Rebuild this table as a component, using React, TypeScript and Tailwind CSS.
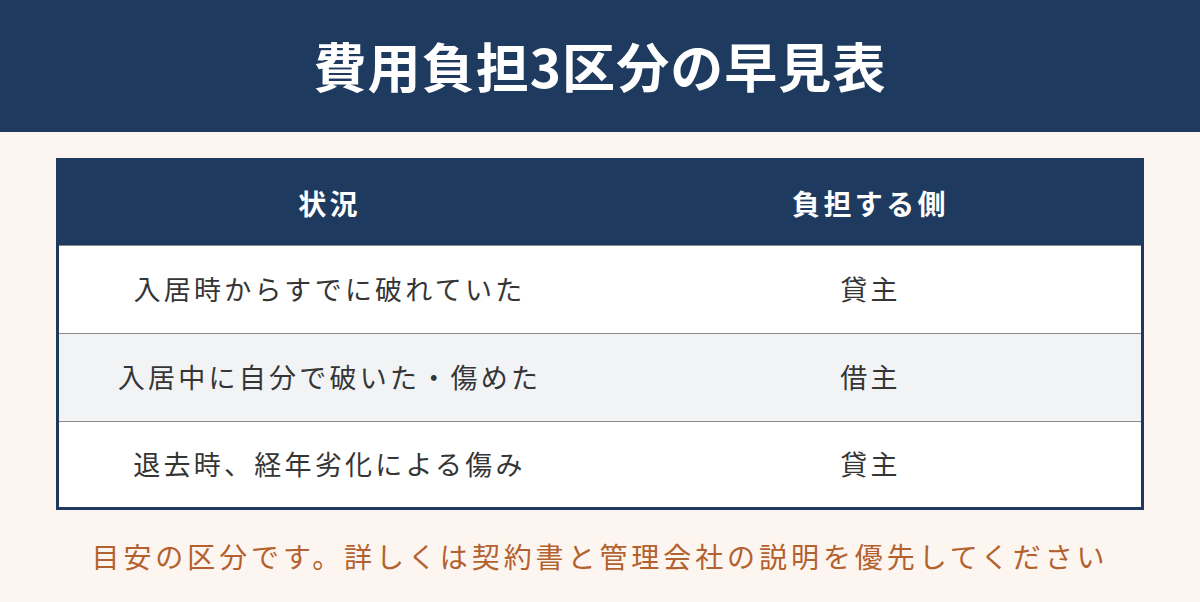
import React from 'react'

const rows = [
  { situation: '入居時からすでに破れていた', payer: '貸主', bg: 'bg-white' },
  { situation: '入居中に自分で破いた・傷めた', payer: '借主', bg: 'bg-[#f2f3f5]' },
  { situation: '退去時、経年劣化による傷み', payer: '貸主', bg: 'bg-white' },
]

function App() {
  return (
    <div
      className="w-[1200px] h-[602px] bg-[#fdf6f0] flex flex-col"
      style={{ fontFamily: '"Noto Sans CJK JP", "Noto Sans", sans-serif' }}
    >
      <header className="h-[132px] bg-[#1f3a5f] flex items-center justify-center">
        <h1 className="text-white text-[53px] font-bold tracking-[0.02em]">費用負担3区分の早見表</h1>
      </header>

      <div className="mx-[56px] mt-[26px] border-[3px] border-[#1f3a5f]">
        <div className="h-[85px] bg-[#1f3a5f] grid grid-cols-2 border-b border-[#8a8a8a] text-white text-[28px] font-bold tracking-[0.12em]">
          <div className="flex items-center justify-center">状況</div>
          <div className="flex items-center justify-center">負担する側</div>
        </div>
        {rows.map((r, i) => (
          <div
            key={i}
            className={`grid grid-cols-2 text-[27px] text-[#353535] tracking-[0.12em] ${r.bg} ${
              i < rows.length - 1 ? 'h-[88px] border-b border-[#8a8a8a]' : 'h-[85px]'
            }`}
          >
            <div className="flex items-center justify-center">{r.situation}</div>
            <div className="flex items-center justify-center">{r.payer}</div>
          </div>
        ))}
      </div>

      <p className="mt-[25px] text-center text-[28px] text-[#b3612e] tracking-[0.14em]">
        目安の区分です。詳しくは契約書と管理会社の説明を優先してください
      </p>
    </div>
  )
}

export default App
